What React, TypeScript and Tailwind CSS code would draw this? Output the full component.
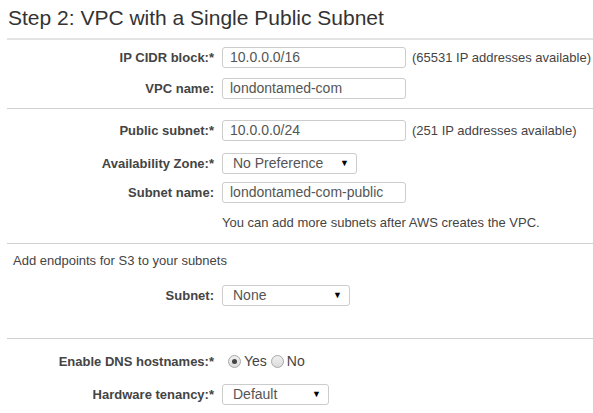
const font = { fontFamily: '"Liberation Sans", Arial, sans-serif' };

const Row = ({ label, mt, children }: { label: string; mt: string; children: React.ReactNode }) => (
  <div className={`flex h-[21px] items-center ${mt}`}>
    <div className="w-[214px] shrink-0 text-right text-[13px] font-bold text-[#444]">{label}</div>
    <div className="ml-[8px] flex items-center">{children}</div>
  </div>
);

const TextBox = ({ value }: { value: string }) => (
  <div className="h-[21px] w-[184px] rounded-[3px] border border-[#ccc] bg-white pl-[7px] text-[14px] leading-[19px] text-[#555]">
    {value}
  </div>
);

const Select = ({ value, w }: { value: string; w: string }) => (
  <div className={`${w} flex h-[21px] items-center justify-between rounded-[3px] border border-[#ccc] bg-white pl-[10px] pr-[7px] text-[14px] text-[#555]`}>
    <span>{value}</span>
    <span className="text-[9px] text-black">▼</span>
  </div>
);

const Radio = ({ checked }: { checked?: boolean }) => (
  <span className="inline-flex h-[13px] w-[13px] items-center justify-center rounded-full border border-[#a8a8a8] bg-gradient-to-b from-[#f0f0f0] to-[#dcdcdc]">
    {checked && <span className="h-[5px] w-[5px] rounded-full bg-[#444]" />}
  </span>
);

const Hint = ({ children }: { children: React.ReactNode }) => (
  <span className="ml-[6px] text-[13px] text-[#444]">{children}</span>
);

export default function App() {
  return (
    <div style={font} className="h-[413px] w-[593px] overflow-hidden bg-white">
      <h2 className="pl-[8px] pt-[6px] text-[21px] leading-[24px] text-[#333]">Step 2: VPC with a Single Public Subnet</h2>
      <div className="ml-[7px] mt-[8px] h-[2px] bg-[#e3e3e3]" />

      <Row label="IP CIDR block:*" mt="mt-[7px]">
        <TextBox value="10.0.0.0/16" />
        <Hint>(65531 IP addresses available)</Hint>
      </Row>
      <Row label="VPC name:" mt="mt-[10px]">
        <TextBox value="londontamed-com" />
      </Row>
      <div className="ml-[7px] mt-[9px] h-px bg-[#d0d0d0]" />

      <Row label="Public subnet:*" mt="mt-[11px]">
        <TextBox value="10.0.0.0/24" />
        <Hint>(251 IP addresses available)</Hint>
      </Row>
      <Row label="Availability Zone:*" mt="mt-[12px]">
        <Select value="No Preference" w="w-[135px]" />
      </Row>
      <Row label="Subnet name:" mt="mt-[8px]">
        <TextBox value="londontamed-com-public" />
      </Row>
      <div className="ml-[222px] mt-[12px] text-[13px] leading-[15px] text-[#444]">
        You can add more subnets after AWS creates the VPC.
      </div>
      <div className="ml-[7px] mt-[13px] h-px bg-[#d0d0d0]" />

      <div className="mt-[9px] pl-[13px] text-[13px] leading-[15px] text-[#444]">Add endpoints for S3 to your subnets</div>
      <Row label="Subnet:" mt="mt-[17px]">
        <Select value="None" w="w-[128px]" />
      </Row>
      <div className="ml-[7px] mt-[32px] h-px bg-[#d0d0d0]" />

      <Row label="Enable DNS hostnames:*" mt="mt-[12px]">
        <div className="flex items-center pl-[6px] text-[14px] text-[#444]">
          <Radio checked />
          <span className="ml-[3px]">Yes</span>
          <span className="ml-[4px] flex items-center">
            <Radio />
          </span>
          <span className="ml-[3px]">No</span>
        </div>
      </Row>
      <Row label="Hardware tenancy:*" mt="mt-[12px]">
        <Select value="Default" w="w-[107px]" />
      </Row>
    </div>
  );
}
